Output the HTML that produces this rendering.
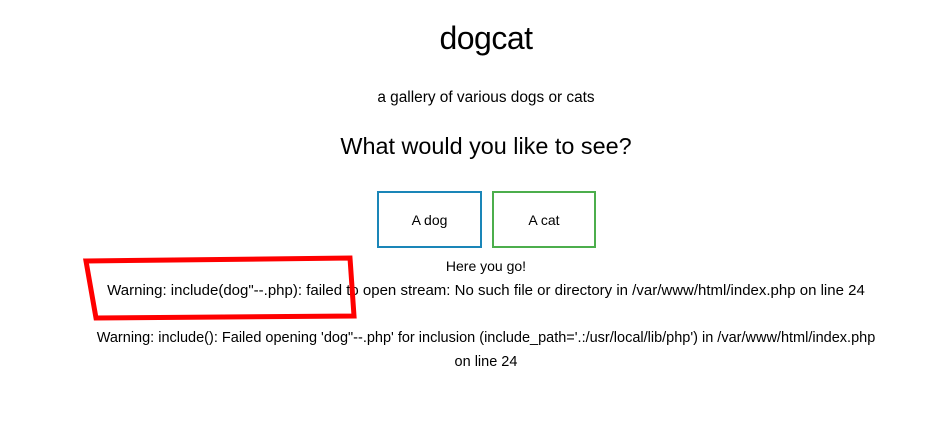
<!DOCTYPE html>
<html><head><meta charset="utf-8"><style>
html,body{margin:0;padding:0;background:#fff;width:930px;height:431px;overflow:hidden;font-family:"Liberation Sans",sans-serif;color:#000}
.c{position:absolute;left:42px;width:888px;text-align:center;white-space:nowrap}
.btn{position:absolute;top:191px;height:57px;box-sizing:border-box;border:2px solid;display:flex;align-items:center;justify-content:center;font-size:14px}
</style></head><body>
<div class="c" style="top:20px;font-size:32px;letter-spacing:-0.5px">dogcat</div>
<div class="c" style="top:89px;font-size:15.4px">a gallery of various dogs or cats</div>
<div class="c" style="top:133px;font-size:23.4px">What would you like to see?</div>
<div class="btn" style="left:377px;width:105px;border-color:#1a86b8">A dog</div>
<div class="btn" style="left:492px;width:104px;border-color:#4cae4c">A cat</div>
<div class="c" style="top:258px;font-size:14px">Here you go!</div>
<div class="c" style="top:282px;font-size:15px">Warning: include(dog"--.php): failed to open stream: No such file or directory in /var/www/html/index.php on line 24</div>
<div class="c" style="top:330px;font-size:14.5px">Warning: include(): Failed opening 'dog"--.php' for inclusion (include_path='.:/usr/local/lib/php') in /var/www/html/index.php</div>
<div class="c" style="top:354px;font-size:14.5px">on line 24</div>
<svg style="position:absolute;left:0;top:0" width="930" height="431"><polygon points="86,261 350,258 354,316 96,318" fill="none" stroke="#f00" stroke-width="5"/></svg>
</body></html>
